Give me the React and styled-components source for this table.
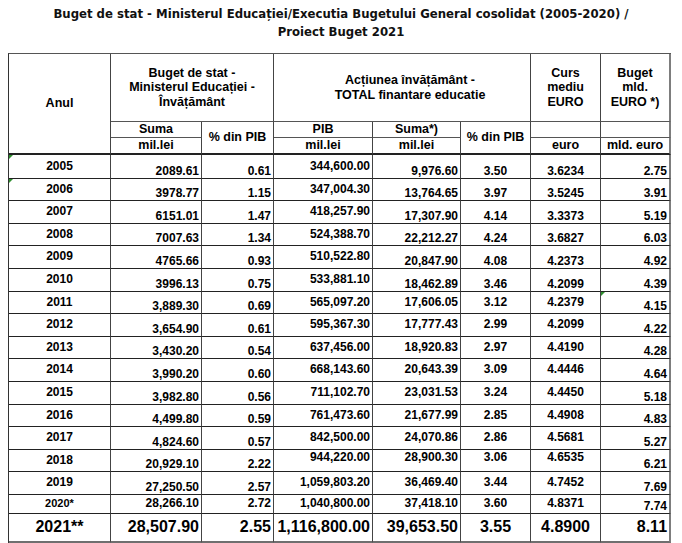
import React from 'react';
import styled, { createGlobalStyle } from 'styled-components';

const Global = createGlobalStyle`
  html, body { margin: 0; padding: 0; background: #fff; }
  body { font-family: "Liberation Sans", Arial, sans-serif; color: #000; }
`;

const Page = styled.div`
  width: 682px;
  padding-top: 5px;
`;

const Title = styled.h1`
  margin: 0 0 12px;
  font-family: "DejaVu Sans Condensed", "DejaVu Sans", sans-serif;
  font-stretch: condensed;
  font-weight: bold;
  font-size: 13px;
  line-height: 18px;
  text-align: center;
  color: #111;
`;

const Table = styled.table`
  border-collapse: separate;
  border-spacing: 0;
  table-layout: fixed;
  width: 662px;
  margin-left: 8px;
  border-top: 1px solid #555;
  border-left: 1px solid #333;
  font-weight: bold;
`;

const Row = styled.tr`
  height: ${(p) => p.$h}px;
`;

const Th = styled.th`
  box-sizing: border-box;
  padding: 0 2px 0 ${(p) => p.$pl ?? 2}px;
  border-right: ${(p) => (p.$last ? '2px solid #7d7d7d' : '1px solid #444')};
  border-bottom: ${(p) => (p.$thick ? '2px solid #222' : '1px solid #555')};
  font-size: 12.5px;
  line-height: 14.5px;
  font-weight: bold;
  text-align: center;
  vertical-align: ${(p) => p.$valign || 'middle'};
  white-space: nowrap;
`;

const Td = styled.td`
  box-sizing: border-box;
  position: relative;
  padding: ${(p) => (p.$valign === 'top' ? '1px' : '0')} ${(p) => (p.$align === 'right' ? '2px' : '1px')} 0 1px;
  border-right: ${(p) => (p.$last ? '2px solid #7d7d7d' : '1px solid #444')};
  border-bottom: ${(p) => (p.$final ? '2px solid #6f6f6f' : '1px solid #222')};
  text-align: ${(p) => p.$align || 'center'};
  vertical-align: ${(p) => p.$valign || 'middle'};
  font-size: ${(p) => (p.$big ? '16px' : p.$small ? '11px' : '12px')};
  line-height: ${(p) => (p.$big ? '18px' : '13px')};
  white-space: nowrap;
`;

const Flag = styled.span`
  position: absolute;
  left: 0;
  top: 0;
  width: 0;
  height: 0;
  border-top: 4px solid #2f8f2f;
  border-right: 4px solid transparent;
`;

const cols = [102, 91, 72, 99, 88, 70, 70, 70];
const aligns = ['center', 'right', 'right', 'right', 'right', 'center', 'center', 'right'];

const rows = [
  ['2005', '2089.61', '0.61', '344,600.00', '9,976.60', '3.50', '3.6234', '2.75'],
  ['2006', '3978.77', '1.15', '347,004.30', '13,764.65', '3.97', '3.5245', '3.91'],
  ['2007', '6151.01', '1.47', '418,257.90', '17,307.90', '4.14', '3.3373', '5.19'],
  ['2008', '7007.63', '1.34', '524,388.70', '22,212.27', '4.24', '3.6827', '6.03'],
  ['2009', '4765.66', '0.93', '510,522.80', '20,847.90', '4.08', '4.2373', '4.92'],
  ['2010', '3996.13', '0.75', '533,881.10', '18,462.89', '3.46', '4.2099', '4.39'],
  ['2011', '3,889.30', '0.69', '565,097.20', '17,606.05', '3.12', '4.2379', '4.15'],
  ['2012', '3,654.90', '0.61', '595,367.30', '17,777.43', '2.99', '4.2099', '4.22'],
  ['2013', '3,430.20', '0.54', '637,456.00', '18,920.83', '2.97', '4.4190', '4.28'],
  ['2014', '3,990.20', '0.60', '668,143.60', '20,643.39', '3.09', '4.4446', '4.64'],
  ['2015', '3,982.80', '0.56', '711,102.70', '23,031.53', '3.24', '4.4450', '5.18'],
  ['2016', '4,499.80', '0.59', '761,473.60', '21,677.99', '2.85', '4.4908', '4.83'],
  ['2017', '4,824.60', '0.57', '842,500.00', '24,070.86', '2.86', '4.5681', '5.27'],
  ['2018', '20,929.10', '2.22', '944,220.00', '28,900.30', '3.06', '4.6535', '6.21'],
  ['2019', '27,250.50', '2.57', '1,059,803.20', '36,469.40', '3.44', '4.7452', '7.69'],
  ['2020*', '28,266.10', '2.72', '1,040,800.00', '37,418.10', '3.60', '4.8371', '7.74'],
];

const heights = [24, 22, 23, 22, 23, 23, 22, 23, 22, 23, 23, 22, 23, 22, 23, 19];

const total = ['2021**', '28,507.90', '2.55', '1,116,800.00', '39,653.50', '3.55', '4.8900', '8.11'];

function valignFor(r, c) {
  const year = rows[r][0];
  if (year === '2020*') return c === 7 ? 'bottom' : 'middle';
  if (c === 0) return 'middle';
  if (c === 1 || c === 2 || c === 7) return 'bottom';
  if (year === '2018') return 'top';
  if (c === 3) return 'middle';
  return r <= 5 ? 'bottom' : 'middle';
}

const flags = { '0-0': true, '1-0': true, '6-7': true };

export default function App() {
  return (
    <Page>
      <Global />
      <Title>
        Buget de stat - Ministerul Educației/Executia Bugetului General cosolidat (2005-2020) /
        <br />
        Proiect Buget 2021
      </Title>
      <Table>
        <colgroup>
          {cols.map((w, i) => (
            <col key={i} style={{ width: w }} />
          ))}
        </colgroup>
        <thead>
          <Row $h={68}>
            <Th rowSpan={3} $thick>Anul</Th>
            <Th colSpan={2}>
              Buget de stat -<br />Ministerul Educației -<br />Învățământ
            </Th>
            <Th colSpan={3} $pl={18}>
              Acțiunea învățământ -<br />TOTAL finantare educatie
            </Th>
            <Th>
              Curs<br />mediu<br />EURO
            </Th>
            <Th $last>
              Buget<br />mld.<br />EURO *)
            </Th>
          </Row>
          <Row $h={16}>
            <Th>Suma</Th>
            <Th rowSpan={2} $thick>% din PIB</Th>
            <Th>PIB</Th>
            <Th>Suma*)</Th>
            <Th rowSpan={2} $thick>% din PIB</Th>
            <Th />
            <Th $last />
          </Row>
          <Row $h={15}>
            <Th $thick $valign="bottom">mil.lei</Th>
            <Th $thick $valign="bottom">mil.lei</Th>
            <Th $thick $valign="bottom">mil.lei</Th>
            <Th $thick $valign="bottom">euro</Th>
            <Th $thick $last $valign="bottom">mld. euro</Th>
          </Row>
        </thead>
        <tbody>
          {rows.map((row, r) => (
            <Row key={row[0]} $h={heights[r]}>
              {row.map((v, c) => (
                <Td
                  key={c}
                  $align={aligns[c]}
                  $valign={valignFor(r, c)}
                  $last={c === 7}
                  $small={c === 0 && v === '2020*'}
                >
                  {flags[`${r}-${c}`] && <Flag />}
                  {v}
                </Td>
              ))}
            </Row>
          ))}
          <Row $h={29}>
            {total.map((v, c) => (
              <Td key={c} $big $final $align={aligns[c]} $last={c === 7}>
                {v}
              </Td>
            ))}
          </Row>
        </tbody>
      </Table>
    </Page>
  );
}
